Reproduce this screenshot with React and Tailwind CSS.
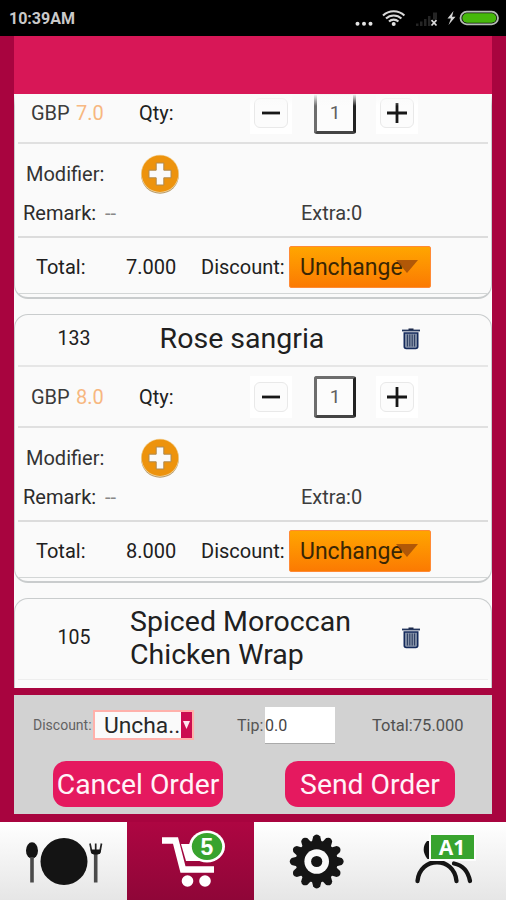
import clsx from "clsx";

// the first entry is scrolled half way out, so its header row stays empty
const orders = [
  { id: "", name: "", price: "7.0", total: "7.000" },
  { id: "133", name: "Rose sangria", price: "8.0", total: "8.000" },
];

function TrashIcon() {
  return (
    <svg width="20" height="22" viewBox="0 0 20 22" className="shrink-0">
      <path d="M7.5 0.500h5v2h-5z" fill="#14213f" />
      <path d="M1 1.600h18v1.800H1z" fill="#24365c" />
      <path d="M3.3 5h13.4v13.600q0 1.900-1.900 1.900H5.200q-1.900 0-1.900-1.900z" fill="#8793a8" stroke="#142a5c" strokeWidth="1.600" />
      <path d="M6.400 6.500v12M8.800 6.500v12M11.200 6.500v12M13.600 6.500v12" stroke="#26375d" strokeWidth="1" />
    </svg>
  );
}

function AddIcon() {
  return (
    <svg width="40" height="40" viewBox="0 0 40 40" className="shrink-0">
      <circle cx="20" cy="20.700" r="19" fill="#b79a68" />
      <circle cx="20" cy="19.700" r="19" fill="#f3d6a0" />
      <circle cx="20" cy="19.700" r="18.300" fill="#ed930d" />
      <path d="M16.200 9h7.600v7.200H31v7.600h-7.200V31h-7.600v-7.200H9v-7.600h7.200z" fill="#fafafa" stroke="#b08a50" strokeWidth="1" />
    </svg>
  );
}

function StatusBar() {
  return (
    <div className="flex h-9 shrink-0 items-center justify-between bg-black pl-[9px] pr-1.5">
      <span className="mt-0.5 text-base font-bold text-[#c9c9c9]">10:39AM</span>
      <svg width="146" height="20" viewBox="354 8 146 20">
        <g fill="#e3e3e3">
          <circle cx="357.500" cy="23.700" r="2" />
          <circle cx="364" cy="23.700" r="2" />
          <circle cx="370.500" cy="23.700" r="2" />
          <circle cx="393.700" cy="24" r="2" />
        </g>
        <g fill="none" stroke="#d8d8d8" strokeWidth="2.100">
          <path d="M383 15.600a15.300 15.300 0 0 1 21.400 0" />
          <path d="M386 18.600a11 11 0 0 1 15.400 0" />
          <path d="M389 21.500a6.800 6.800 0 0 1 9.400 0" />
        </g>
        <path d="M416 26v-2.500h2.500V26zM420 26v-4.500h2.500V26zM424 26v-7h2.500v7zM428 26v-10h2.500v10zM433 19.500v-7h4v7z" fill="#252525" />
        <path d="M431.500 20.200l5 5.300M436.500 20.200l-5 5.300" stroke="#dcdcdc" strokeWidth="1.700" />
        <path d="M453.500 11l-6 7.500h3.500l-2.500 6.500 7-8.300h-3.500z" fill="#d5d5d5" />
        <rect x="460.500" y="11.700" width="37.500" height="12.600" rx="6.300" fill="#111" stroke="#b5bdb5" strokeWidth="1.800" />
        <rect x="462.300" y="13.300" width="34" height="9.400" rx="4.700" fill="#46b80b" />
      </svg>
    </div>
  );
}

function StepButton({ plus }) {
  return (
    <button className="flex h-[42px] w-[42px] items-center justify-center bg-white">
      <span className="flex h-[30px] w-[34px] items-center justify-center rounded-md border border-[#e9e9e9] bg-[#fcfcfc]">
        <svg width="22" height="22" viewBox="0 0 22 22">
          <path d={plus ? "M1 11h20M11 1v20" : "M2 11h18"} stroke="#171717" strokeWidth="2.800" />
        </svg>
      </span>
    </button>
  );
}

function CardHeader({ id, name, long }) {
  return (
    <div className="flex flex-1 items-center pb-[3px]">
      <span className="w-[112px] text-center text-[19.5px]">{id}</span>
      <span className={clsx("w-[224px] text-[28.5px] leading-[33px]", !long && "text-center")}>{name}</span>
      <span className="ml-[47px]">
        <TrashIcon />
      </span>
    </div>
  );
}

function OrderCard({ id, name, price, total }) {
  return (
    <div className="flex h-[269px] shrink-0 flex-col rounded-[14px] border border-[#c9cccd] border-b-2 px-[3px]">
      <div className="flex h-[52px] items-center border-b-2 border-[#e6e6e6]">
        <CardHeader id={id} name={name} />
      </div>
      <div className="flex h-[61px] items-center border-b-2 border-[#e0e0e0] pl-[13px]">
        <span className="w-[45px] text-[#3a3a3a]">GBP</span>
        <span className="w-[63px] text-[#f7b77f]">{price}</span>
        <span className="w-[111px]">Qty:</span>
        <StepButton />
        <span className="ml-[22px] mr-[20px] flex h-[42px] w-[42px] items-center justify-center rounded-[3px] border-[3px] border-[#6d6d6d] border-b-[#444] border-r-[#222] bg-[#fcfcfc] text-[19px] text-[#606060]">
          1
        </span>
        <StepButton plus />
      </div>
      <div className="h-[94px] border-b-2 border-[#dcdcdc] pt-[9px]">
        <div className="flex h-[42px] items-center pl-2">
          <span className="w-[114px] text-[#333]">Modifier:</span>
          <AddIcon />
        </div>
        <div className="flex h-[35px] items-center pl-[5px]">
          <span className="w-[82px] text-[#2c2c2c]">Remark:</span>
          <span className="w-[196px] text-[#888]">--</span>
          <span className="text-[#3c3c3c]">Extra:0</span>
        </div>
      </div>
      <div className="flex h-[56px] items-center border-b border-[#d3d6d6] pl-[18px] pt-[3px]">
        <span className="w-[90px]">Total:</span>
        <span className="w-[75px]">{total}</span>
        <span className="w-[88px]">Discount:</span>
        <button className="flex h-[42px] w-[142px] items-center rounded-[2px] border border-[#ff8a35] bg-linear-to-b from-[#ffa500] to-[#fb7a02] pl-2.5 text-[23px] text-[#3a2604]">
          Unchange
          <svg width="22" height="13" viewBox="0 0 22 13" className="-ml-[7px] -mt-0.5">
            <path d="M0 0h22L11 13z" fill="#a34e08" opacity=".85" />
          </svg>
        </button>
      </div>
    </div>
  );
}

function Summary() {
  return (
    <div className="mx-[14px] h-[119px] shrink-0 bg-[#d2d2d2]">
      <div className="flex h-[60px] items-center pl-[19px]">
        <span className="w-[60px] text-sm text-[#626262]">Discount:</span>
        <button className="flex h-[30px] w-[101px] items-stretch border-2 border-[#ffb1ab] bg-[#fafafa]">
          <span className="w-[87px] pl-[9px] text-left text-[22.8px] leading-[27px] text-[#282828]">Uncha..</span>
          <span className="flex w-[11px] items-center justify-center bg-[#cc0d50]">
            <svg width="7" height="8" viewBox="0 0 7 8">
              <path d="M0 0h7L3.500 8z" fill="#ffe5ef" />
            </svg>
          </span>
        </button>
        <span className="ml-[43px] w-[28px] pt-0.5 text-base text-[#555]">Tip:</span>
        <span className="flex h-[37px] w-[70px] items-center border-b border-[#aaa] bg-white pt-0.5 text-base text-[#444]">0.0</span>
        <span className="ml-[37px] pt-0.5 text-[16.5px] text-[#505050]">Total:75.000</span>
      </div>
      <div className="flex gap-[62px] pl-[39px] pt-[6px] text-[28.3px] text-[#fff3f8]">
        <button className="h-[46px] w-[170px] rounded-[13px] bg-[#e5195f] pt-[3px] whitespace-nowrap">Cancel Order</button>
        <button className="h-[46px] w-[170px] rounded-[13px] bg-[#e5195f] pt-[3px] whitespace-nowrap">Send Order</button>
      </div>
    </div>
  );
}

function PlateIcon() {
  return (
    <svg width="127" height="78" viewBox="0 822 127 78">
      <circle cx="64" cy="861.500" r="23.500" fill="#141414" />
      <ellipse cx="32" cy="850.500" rx="6" ry="8.300" fill="#141414" />
      <path d="M32 857v25.500M95.700 853v29.500" stroke="#4a4a4a" strokeWidth="3.600" />
      <path d="M90 843.500l1.800 9q4 3 8 0l1.700-9M95.700 843.500v9" fill="none" stroke="#222" strokeWidth="1.700" />
      <path d="M90.500 849.500l1.500 4.500h7.700l1.500-4.500z" fill="#141414" />
    </svg>
  );
}

function CartIcon() {
  return (
    <svg width="127" height="78" viewBox="127 822 127 78">
      <path d="M162 840.500h13.500l7.500 29h31" fill="none" stroke="#fff" strokeWidth="6.500" />
      <path d="M181 844h34v17h-29z" fill="#fff" />
      <circle cx="187.500" cy="881" r="5.800" fill="#fff" />
      <circle cx="205" cy="881" r="5.800" fill="#fff" />
      <ellipse cx="207" cy="846.500" rx="18" ry="16" fill="#fff" />
      <ellipse cx="207" cy="846.500" rx="15.200" ry="13.500" fill="#38a32e" />
      <text x="207" y="855" textAnchor="middle" className="fill-white font-['Liberation_Sans'] text-[23px] font-bold">5</text>
    </svg>
  );
}

const teeth = [0, 30, 60, 90, 120, 150, 180, 210, 240, 270, 300, 330];

function GearIcon() {
  return (
    <svg width="126" height="78" viewBox="254 822 126 78">
      <g transform="translate(316.700 861.500)">
        {teeth.map((angle) => (
          <path key={angle} d="M-5-19L-3.500-25Q0-29 3.500-25L5-19z" fill="#151515" transform={`rotate(${angle})`} />
        ))}
        <circle r="21" fill="#151515" />
        <circle r="12.300" fill="#fafafa" />
        <circle r="5.600" fill="#151515" />
      </g>
    </svg>
  );
}

function GuestsIcon() {
  return (
    <svg width="126" height="78" viewBox="380 822 126 78">
      <g fill="none" stroke="#151515" strokeWidth="4.300" strokeLinecap="round">
        <path d="M417.500 881C420 856 454 856 456.500 881" />
        <path d="M454 863.500Q467 866 470 881" />
      </g>
      <path d="M427 841C422.500 846 422.500 853 427.500 859L430 859V841z" fill="#151515" />
      <path d="M429 833h47v28h-47z" fill="#fdfdfd" />
      <path d="M431 835h43v24h-43z" fill="#38a32e" />
      <text x="452" y="855" textAnchor="middle" className="fill-white font-['Open_Sans'] text-[21px] font-bold">A1</text>
    </svg>
  );
}

function BottomNav() {
  return (
    <nav className="mt-2 flex h-[78px] shrink-0 bg-linear-to-b from-white to-[#e6e6e6]">
      <button className="w-[127px]"><PlateIcon /></button>
      <button className="w-[127px] bg-linear-to-b from-[#ae0642] to-[#8f0638]"><CartIcon /></button>
      <button className="w-[126px]"><GearIcon /></button>
      <button className="w-[126px]"><GuestsIcon /></button>
    </nav>
  );
}

export default function App() {
  return (
    <div className="flex h-[900px] w-[506px] flex-col overflow-hidden bg-[#a8043f] font-[Roboto,sans-serif] text-xl leading-none text-[#202020]">
      <StatusBar />
      <header className="mx-[14px] h-[58px] shrink-0 bg-[#d81757]" />
      <main className="relative mx-[14px] flex h-[594px] shrink-0 flex-col gap-[15px] overflow-hidden bg-[#fafafa]">
        {/* fading edge of the scroll area */}
        <div className="absolute inset-x-0 top-0 h-3 bg-linear-to-b from-[#fafafa] to-transparent" />
        <div className="-mt-16 flex flex-col gap-[15px]">
          {orders.map((order) => (
            <OrderCard key={order.price} {...order} />
          ))}
        </div>
        <div className="flex h-[110px] shrink-0 flex-col rounded-t-[14px] border border-b-0 border-[#c9cccd] px-[3px]">
          <div className="flex h-[81px] border-b border-[#eee]">
            <CardHeader id="105" name="Spiced Moroccan Chicken Wrap" long />
          </div>
        </div>
      </main>
      <div className="mt-[7px] flex shrink-0 flex-col">
        <Summary />
        <BottomNav />
      </div>
    </div>
  );
}
